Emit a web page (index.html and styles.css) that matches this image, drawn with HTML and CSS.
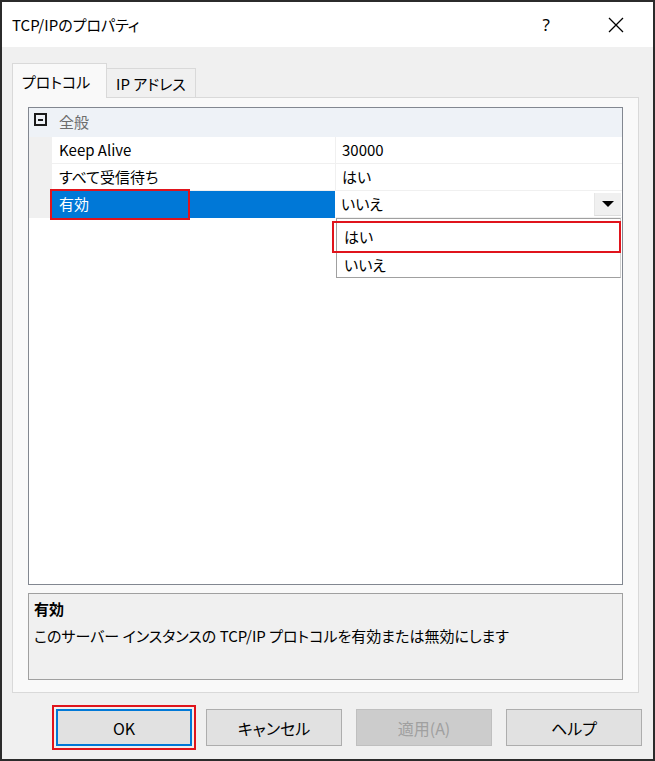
FILE: index.html
```html
<!DOCTYPE html>
<html lang="ja">
<head>
    <meta charset="UTF-8">
    <meta name="viewport" content="width=device-width, initial-scale=1.0">
    <title>TCP/IPのプロパティ</title>
    <link rel="stylesheet" href="styles.css">
</head>
<body>

    <div class="window">
        <div class="titlebar">
            <span class="title">TCP/IPのプロパティ</span>
            <span class="help-btn">?</span>
            <span class="close-btn">
                <svg width="16" height="16" viewBox="0 0 16 16">
                    <path d="M1 1 L15 15 M15 1 L1 15" stroke="#000" stroke-width="1.3" fill="none"/>
                </svg>
            </span>
        </div>

        <div class="content">
            <div class="tabs">
                <div class="tab active">プロトコル</div>
                <div class="tab">IP アドレス</div>
            </div>

            <div class="tab-panel">
                <div class="prop-grid">
                    <div class="row category">
                        <div class="margin"><span class="collapse"></span></div>
                        <div class="cat-name">全般</div>
                    </div>
                    <div class="row">
                        <div class="margin"></div>
                        <div class="name">Keep Alive</div>
                        <div class="value">30000</div>
                    </div>
                    <div class="row">
                        <div class="margin"></div>
                        <div class="name">すべて受信待ち</div>
                        <div class="value">はい</div>
                    </div>
                    <div class="row">
                        <div class="margin"></div>
                        <div class="name selected">有効<span class="mark mark-name"></span></div>
                        <div class="value editing">
                            <span>いいえ</span>
                            <span class="drop-btn"><span class="arrow"></span></span>
                        </div>
                    </div>

                    <div class="dropdown">
                        <div class="option marked">はい</div>
                        <div class="option">いいえ</div>
                    </div>
                </div>

                <div class="description">
                    <div class="desc-title">有効</div>
                    <div class="desc-text">このサーバー インスタンスの TCP/IP プロトコルを有効または無効にします</div>
                </div>
            </div>

            <div class="buttons">
                <button class="btn default">OK</button>
                <button class="btn">キャンセル</button>
                <button class="btn" disabled>適用(A)</button>
                <button class="btn">ヘルプ</button>
            </div>
        </div>
    </div>

</body>
</html>
```

FILE: styles.css
```css
body {
    margin: 0;
    font-family: "Noto Sans CJK JP", "Noto Sans", sans-serif;
    font-feature-settings: "palt";
    font-size: 15px;
    color: #000;
}

.window {
    width: 655px;
    height: 761px;
    box-sizing: border-box;
    border: 2px solid #2b2b2b;
    background-color: #f0f0f0;
    display: flex;
    flex-direction: column;
}

.titlebar {
    height: 45px;
    background-color: #fff;
    display: flex;
    align-items: center;
    padding-left: 10px;
    flex-shrink: 0;
}

.title {
    flex: 1;
    font-size: 15px;
}

.help-btn {
    font-family: "Noto Sans", sans-serif;
    font-size: 17px;
    margin-right: 58px;
}

.close-btn {
    display: flex;
    margin-right: 29px;
}

.content {
    padding: 16px 0 0 10px;
}

.tabs {
    display: flex;
    align-items: flex-end;
    height: 34px;
}

.tab {
    height: 29px;
    box-sizing: border-box;
    padding: 0 9px 0 9px;
    border: 1px solid #d9d9d9;
    border-left: none;
    border-bottom: none;
    display: flex;
    align-items: center;
    line-height: 1;
}

.tab.active {
    height: 35px;
    margin-bottom: -1px;
    padding: 0 9px;
    border-left: 1px solid #d9d9d9;
    background-color: #f9f9f9;
    position: relative;
    z-index: 1;
    width: 95px;
}

.tab-panel {
    width: 627px;
    height: 596px;
    box-sizing: border-box;
    border: 1px solid #d9d9d9;
    background-color: #f9f9f9;
    padding: 9px 15px 12px 15px;
}

.prop-grid {
    position: relative;
    height: 478px;
    box-sizing: border-box;
    border: 1px solid #828790;
    background-color: #fff;
}

.row {
    display: grid;
    grid-template-columns: 23px 283px 1fr;
    height: 27px;
}

.row.category {
    height: 29px;
    background-color: #eef2f7;
}

.margin {
    background-color: #f0f0f0;
    display: flex;
    justify-content: center;
    padding-top: 5px;
    box-sizing: border-box;
}

.category .margin {
    background-color: #eef2f7;
}

.collapse {
    width: 13px;
    height: 13px;
    box-sizing: border-box;
    border: 2px solid #1a1a1a;
    position: relative;
    margin-left: -1px;
}

.collapse::after {
    content: "";
    position: absolute;
    left: 2px;
    right: 2px;
    top: 3.5px;
    height: 2px;
    background-color: #1a1a1a;
}

.cat-name {
    grid-column: 2 / 4;
    color: #6d6d6d;
    padding-left: 7px;
    line-height: 28px;
}

.name,
.value {
    line-height: 26px;
    border-bottom: 1px solid #f0f0f0;
}

.name {
    padding-left: 7px;
    position: relative;
}

.name.selected {
    background-color: #0078d7;
    color: #fff;
    border-bottom-color: #0078d7;
}

.value {
    padding-left: 6px;
    border-left: 1px solid #f0f0f0;
}

.value.editing {
    display: flex;
    justify-content: space-between;
    align-items: center;
    padding-right: 1px;
    border-left: none;
}

.drop-btn {
    width: 26px;
    height: 22px;
    background-color: #f0f0f0;
    border-bottom: 1px solid #dcdcdc;
    border-left: 1px solid #e6e6e6;
    display: flex;
    align-items: center;
    justify-content: center;
}

.arrow {
    width: 0;
    height: 0;
    border-left: 6px solid transparent;
    border-right: 6px solid transparent;
    border-top: 6px solid #000;
}

.mark {
    position: absolute;
    border: 2px solid #e0141c;
    pointer-events: none;
}

.mark-name {
    left: -2px;
    top: -2px;
    width: 136px;
    height: 27px;
}

.dropdown {
    position: absolute;
    left: 307px;
    top: 110px;
    width: 285px;
    height: 60px;
    box-sizing: border-box;
    border: 1px solid #a0a0a0;
    border-right-color: #d0d0d0;
    background-color: #fff;
    padding-top: 4px;
}

.option {
    height: 28px;
    line-height: 28px;
    padding-left: 7px;
}

.option.marked {
    outline: 2px solid #e0141c;
    margin-left: -3px;
    margin-right: 1px;
    padding-left: 10px;
    height: 28px;
}

.description {
    margin-top: 8px;
    height: 87px;
    box-sizing: border-box;
    border: 1px solid #a0a0a0;
    background-color: #f0f0f0;
    padding: 3px 5px;
}

.desc-title {
    font-weight: bold;
    line-height: 24px;
}

.desc-text {
    line-height: 30px;
}

.buttons {
    display: flex;
    justify-content: flex-end;
    gap: 14px;
    margin-top: 16px;
    padding-right: 11px;
}

.btn {
    width: 136px;
    height: 37px;
    font-family: "Noto Sans CJK JP", "Noto Sans", sans-serif;
    font-feature-settings: "palt";
    font-size: 16px;
    color: #000;
    background-color: #e1e1e1;
    border: 1px solid #adadad;
    padding: 0;
}

.btn.default {
    border: 2px solid #0078d7;
    outline: 2px solid #e0141c;
    outline-offset: 2px;
}

.btn:disabled {
    background-color: #cccccc;
    border-color: #bfbfbf;
    color: #a0a0a0;
}
```
